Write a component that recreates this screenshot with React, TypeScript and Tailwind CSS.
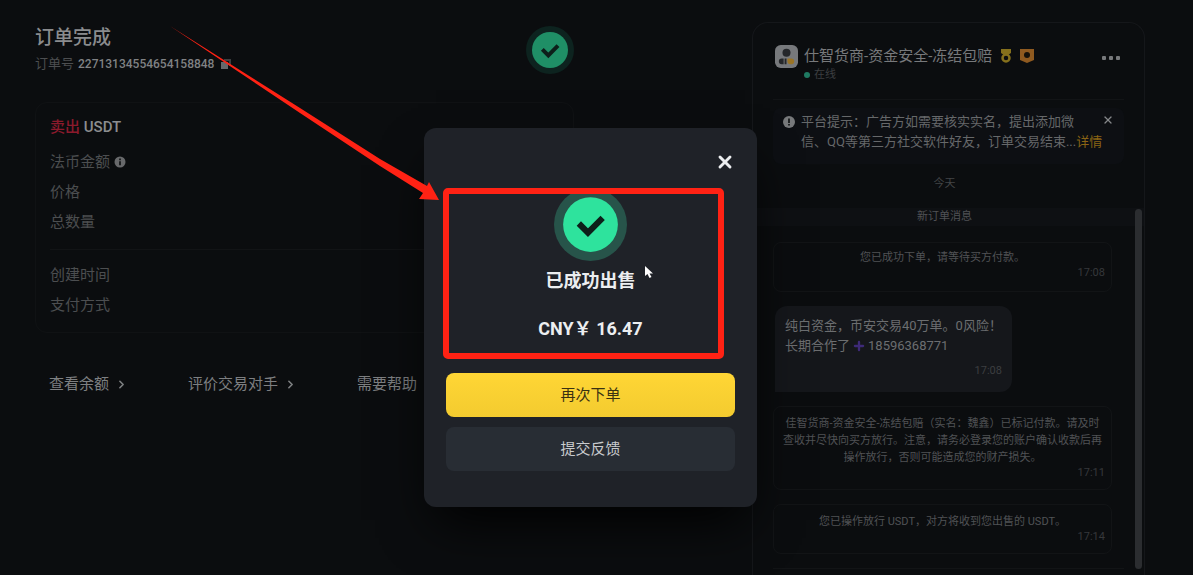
import { ChevronRight, Plus, X } from "lucide-react";
import type { ReactNode } from "react";

type Message = {
  lines: string[];
  time: string;
  className: string;
};

const details = ["价格", "总数量"];
const payment = ["创建时间", "支付方式"];

function SuccessIcon({ className, ring, fill }: { className: string; ring: string; fill: string }) {
  return (
    <svg viewBox="0 0 72 72" className={className} aria-hidden="true">
      <circle cx="36" cy="36" r="36" fill={ring} />
      <circle cx="36" cy="36" r="27" fill={fill} />
      <path d="M24.5 35 33.5 44 48 29.500" fill="none" stroke="#0d1f1a" strokeWidth="6" />
    </svg>
  );
}

function SystemMessage({ lines, time, className }: Message) {
  return (
    <div className={`rounded-lg border border-[#121416] px-1.5 text-center text-[11px] text-[#505255] ${className}`}>
      {lines.map((line) => (
        <p key={line} className="whitespace-nowrap leading-[17px]">
          {line}
        </p>
      ))}
      <p className="text-right leading-3.5 text-[#36383b]">{time}</p>
    </div>
  );
}

function FooterLink({ children }: { children: ReactNode }) {
  return (
    <a href="#" className="flex items-center gap-1.5 whitespace-nowrap">
      {children}
      <ChevronRight size={13} strokeWidth={3} />
    </a>
  );
}

function OrderView() {
  return (
    <section className="min-w-0 flex-1 pl-[35px]">
      <div className="max-w-[539px]">
        <div className="flex items-start justify-between">
          <div>
            <h1 className="text-[19px] leading-6 font-medium text-[#8a8c8e]">订单完成</h1>
            <p className="mt-1 flex items-center gap-1 text-xs leading-5 text-[#4c4e50]">
              <span className="text-[13px]">订单号</span>
              <span className="font-medium text-[#808284]">22713134554654158848</span>
              <svg viewBox="0 0 12 12" className="ml-0.5 size-3" aria-hidden="true">
                <path d="M4 1h7v7H9V3H4z" fill="#3c3e40" />
                <path d="M1 4h7v7H1z" fill="#66686a" />
              </svg>
            </p>
          </div>
          <SuccessIcon className="size-12" ring="#0d231f" fill="#1f8f66" />
        </div>

        <div className="mt-7 rounded-xl border border-[#101214] px-3.5 pt-3 pb-3">
          <h2 className="text-[15px] leading-6 font-medium text-[#8b8d8f]">
            <span className="text-[#8c1a2c]">卖出</span> USDT
          </h2>
          <ul className="mt-2 text-[15px] leading-[30px] text-[#4c4e50]">
            <li className="flex items-center gap-1">
              法币金额
              <svg viewBox="0 0 12 12" className="size-3" aria-hidden="true">
                <circle cx="6" cy="6" r="5.500" fill="#68696b" />
                <path d="M6 2.500v1.800M6 5.200v4" stroke="#0c0e10" strokeWidth="1.600" />
              </svg>
            </li>
            {details.map((item) => (
              <li key={item}>{item}</li>
            ))}
          </ul>
          <ul className="mt-3 border-t border-[#121416] pt-2.5 text-[15px] leading-[30px] text-[#4c4e50]">
            {payment.map((item) => (
              <li key={item}>{item}</li>
            ))}
          </ul>
        </div>

        <div className="mt-9 flex gap-[60px] pl-3.5 text-[15px] leading-[30px] text-[#7d7f81]">
          <FooterLink>查看余额</FooterLink>
          <FooterLink>评价交易对手</FooterLink>
          <FooterLink>需要帮助</FooterLink>
        </div>
      </div>
    </section>
  );
}

function ChatPanel() {
  return (
    <aside className="relative -mt-1 w-[393px] shrink-0 self-stretch rounded-t-2xl border border-[#15171a] border-b-0">
      <header className="mx-5 flex h-[77px] items-start border-b border-[#121416] pt-[22px]">
        <svg viewBox="0 0 24 24" className="ml-0.5 size-[23px]" aria-hidden="true">
          <rect width="24" height="24" rx="6" fill="#77797c" />
          <circle cx="12" cy="8" r="4.200" fill="#25272a" />
          <path d="M4 17a3 3 0 0 1 3-3h2v6H7a3 3 0 0 1-3-3zM10 14h2v6h-2z" fill="#25272a" />
          <path d="M13 14h4a3 3 0 0 1 0 6h-1a3 3 0 0 1-3-3z" fill="#9a7426" />
        </svg>
        <div className="ml-1.5 min-w-0">
          <h2 className="text-[15px] leading-[22px] whitespace-nowrap text-[#77797b]">仕智货商-资金安全-冻结包赔</h2>
          <p className="flex items-center gap-1 text-[11px] leading-4 text-[#3c3e40]">
            <span className="size-1.5 rounded-full bg-[#1f7a62]" />
            在线
          </p>
        </div>
        <svg viewBox="0 0 12 14" className="mt-1 ml-2 h-3.5 w-3" aria-hidden="true">
          <path d="M1 0h10v4L8 6H4L1 4z" fill="#85701c" />
          <circle cx="6" cy="9" r="3.500" fill="none" stroke="#85701c" strokeWidth="2.500" />
        </svg>
        <svg viewBox="0 0 14 14" className="mt-1 ml-2 size-3.5" aria-hidden="true">
          <path d="M0 0h14v11l-7 3-7-3z" fill="#8f5a20" />
          <circle cx="7" cy="6" r="3" fill="#15110b" />
        </svg>
        <button type="button" aria-label="更多" className="mt-[11px] mr-1 ml-auto flex gap-[3px]">
          <span className="size-1 rounded-[1px] bg-[#77797b]" />
          <span className="size-1 rounded-[1px] bg-[#77797b]" />
          <span className="size-1 rounded-[1px] bg-[#77797b]" />
        </button>
      </header>

      <div className="mx-5 mt-2 flex h-14 items-start rounded-lg bg-[#0d0f13] px-2.5 pt-1">
        <svg viewBox="0 0 12 12" className="mt-1 size-3 shrink-0" aria-hidden="true">
          <circle cx="6" cy="6" r="6" fill="#77797b" />
          <path d="M6 2.500v4.500M6 8v1.600" stroke="#0c0e10" strokeWidth="1.600" />
        </svg>
        <p className="ml-1.5 text-[13px] leading-5 whitespace-nowrap text-[#66686a]">
          平台提示：广告方如需要核实实名，提出添加微
          <br />
          信、QQ等第三方社交软件好友，订单交易结束...
          <a href="#" className="text-[#8a6414]">
            详情
          </a>
        </p>
        <button type="button" aria-label="关闭提示" className="mt-0.5 ml-auto text-[#85878a]">
          <X size={12} strokeWidth={2.5} />
        </button>
      </div>

      <p className="mt-2.5 pr-2 text-center text-[11px] leading-5 text-[#434547]">今天</p>
      <p className="mt-3.5 bg-[#0e1013] pr-2 text-center text-[11px] leading-[18px] text-[#505255]">新订单消息</p>

      <div className="mr-8 ml-5">
        <SystemMessage className="mt-4 h-[50px] pt-1.5" lines={["您已成功下单，请等待买方付款。"]} time="17:08" />
        <div className="mt-3.5 ml-0.5 h-[86px] w-[237px] rounded-xl rounded-bl-none bg-[#15171b] px-2.5 pt-2.5 text-[13px] leading-5 text-[#6c6e70]">
          <p className="whitespace-nowrap">纯白资金，币安交易40万单。0风险！</p>
          <p className="flex items-center">
            长期合作了
            <Plus size={14} strokeWidth={4} className="mx-0.5 text-[#3e2a78]" />
            18596368771
          </p>
          <p className="mt-2 text-right text-[11px] leading-3.5 text-[#3c3e40]">17:08</p>
        </div>
        <SystemMessage
          className="mt-3.5 h-[84px] pt-2"
          lines={[
            "佳智货商-资金安全-冻结包赔（实名：魏鑫）已标记付款。请及时",
            "查收并尽快向买方放行。注意，请务必登录您的账户确认收款后再",
            "操作放行，否则可能造成您的财产损失。",
          ]}
          time="17:11"
        />
        <SystemMessage
          className="mt-3.5 h-[50px] pt-2"
          lines={["您已操作放行 USDT，对方将收到您出售的 USDT。"]}
          time="17:14"
        />
      </div>
      <div className="mx-5 mt-3.5 border-t border-[#121416]" />
      <div className="absolute top-[186px] right-0.5 bottom-1.5 w-[7px] rounded-full bg-[#2b2d30]" />
    </aside>
  );
}

function SuccessDialog() {
  return (
    <div
      role="dialog"
      aria-labelledby="dialog-title"
      className="relative w-[333px] rounded-xl bg-[#1f2228] px-[22px] pb-9 shadow-2xl shadow-black"
    >
      <div className="flex justify-end pt-6">
        <button type="button" aria-label="关闭" className="text-[#eceef0]">
          <X size={20} strokeWidth={3.5} />
        </button>
      </div>
      <div className="flex flex-col items-center pt-4 text-[#eceef0]">
        <SuccessIcon className="size-[73px]" ring="#27544a" fill="#2ee39d" />
        <h2 id="dialog-title" className="mt-2 text-lg leading-6 font-bold">
          已成功出售
        </h2>
        <p className="mt-6 text-lg leading-6 font-bold">CNY￥ 16.47</p>
      </div>
      <button
        type="button"
        className="mt-8 h-11 w-full rounded-lg bg-linear-to-b from-[#ffd635] to-[#f3cb2f] text-[15px] text-[#3a3112]"
      >
        再次下单
      </button>
      <button type="button" className="mt-2.5 h-11 w-full rounded-lg bg-[#282d34] text-[15px] text-[#c8cacd]">
        提交反馈
      </button>

      {/* highlight box */}
      <div className="pointer-events-none absolute top-[60px] right-[33px] left-[19px] h-[171px] rounded-[5px] border-6 border-[#ff2214]" />
      {/* arrow */}
      <svg
        viewBox="0 0 280 180"
        className="pointer-events-none absolute top-[-104px] left-[-256px] h-[180px] w-[280px]"
        aria-hidden="true"
      >
        <path d="M2 2 132 84 212 135 259 162 261 158 271 176 251 175 255 169 212 142 132 89z" fill="#ff2214" />
      </svg>
      {/* mouse pointer */}
      <svg
        viewBox="0 0 12 16"
        className="pointer-events-none absolute top-[137px] left-[220px] h-4 w-3"
        aria-hidden="true"
      >
        <path d="M1 1v10l2.500-2 2 4 2-1-2-3.500H9z" fill="#fff" />
      </svg>
    </div>
  );
}

export default function App() {
  return (
    <main className="relative min-h-screen overflow-hidden bg-[#0b0d0f] font-[Roboto,'Noto_Sans_CJK_SC',sans-serif]">
      <div className="flex min-h-screen pt-[26px] pr-12">
        <OrderView />
        <ChatPanel />
      </div>
      <div className="absolute inset-0 flex items-start justify-center pt-32 pr-3">
        <SuccessDialog />
      </div>
    </main>
  );
}
